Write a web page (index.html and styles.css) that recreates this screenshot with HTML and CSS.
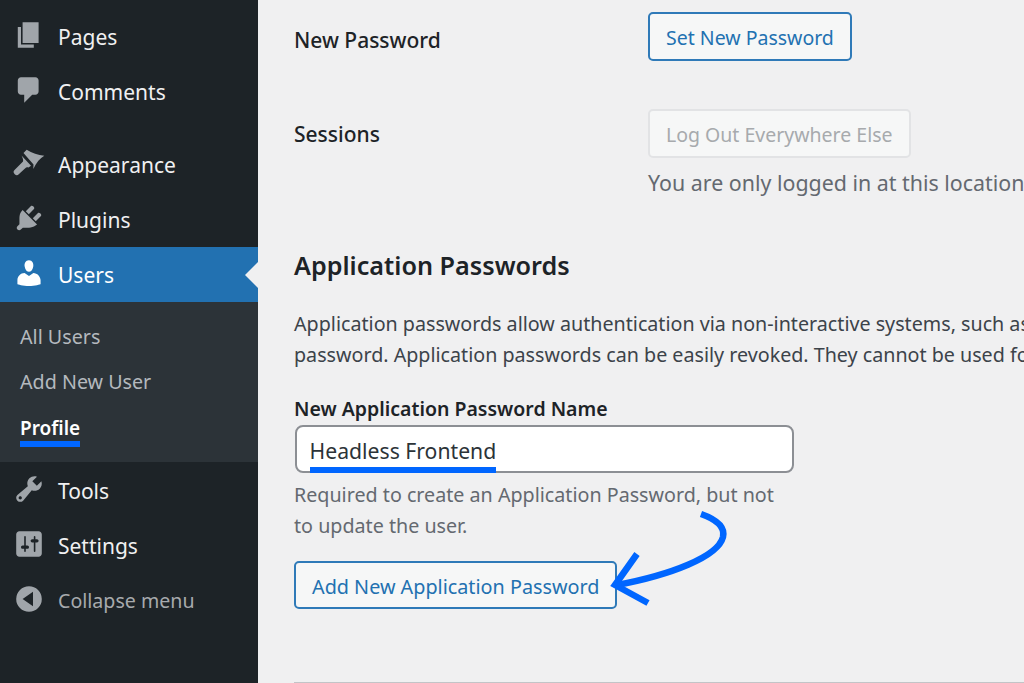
FILE: index.html
```html
<!DOCTYPE html>
<html lang="en">
<head>
  <meta charset="UTF-8">
  <meta name="viewport" content="width=device-width, initial-scale=1.0">
  <title>Profile</title>
  <link rel="stylesheet" href="styles.css">
</head>
<body>
  <nav class="sidebar">
    <a class="menu-item" href="#">
      <svg class="icon" viewBox="0 0 20 20"><path d="M6 15V2h10v13H6zm-1 1h8v2H3V5h2v11z"/></svg>
      <span>Pages</span>
    </a>
    <a class="menu-item" href="#">
      <svg class="icon" viewBox="0 0 20 20"><path d="M5 2h9c1.100 0 2 .9 2 2v7c0 1.100-.9 2-2 2h-2l-5 5v-5H5c-1.100 0-2-.9-2-2V4c0-1.100.9-2 2-2z"/></svg>
      <span>Comments</span>
    </a>
    <div class="menu-separator"></div>
    <a class="menu-item" href="#">
      <svg class="icon" viewBox="0 0 32 32"><path d="M10.500 6L13.700 2.700C19 6 25 8 31.300 8.700C27 11 23.500 15.500 20.300 22L20.500 17.500z"/><path d="M8.500 8.500L18 18.700L15.500 20.500C14 20 13 20.500 12 21.500L6 27a3 3 0 0 1-4.500-4L10 14.500C10.500 12.500 9.500 10.500 8.500 8.500z"/></svg>
      <span>Appearance</span>
    </a>
    <a class="menu-item" href="#">
      <svg class="icon" viewBox="0 0 20 20"><path d="M13.110 4.360L9.870 7.600 8 5.730l3.240-3.240c.35-.34 1.050-.2 1.560.32.52.51.66 1.210.31 1.550zm-8 1.770l.91-1.120 9.010 9.010-1.190.84c-.71.71-2.630 1.160-3.820 1.160H6.140L4.900 17.260c-.59.59-1.540.59-2.120 0-.59-.58-.59-1.530 0-2.120l1.240-1.240v-3.880c0-1.130.4-3.190 1.090-3.890zm7.260 3.970l3.240-3.240c.34-.35 1.040-.21 1.550.31.52.51.66 1.210.31 1.550l-3.240 3.250z"/></svg>
      <span>Plugins</span>
    </a>
    <a class="menu-item active" href="#">
      <svg class="icon" viewBox="0 0 20 20"><path d="M10 9.250c-2.270 0-2.730-3.440-2.730-3.440C7 4.020 7.820 2 9.970 2c2.160 0 2.980 2.020 2.710 3.810 0 0-.41 3.440-2.680 3.440zm0 2.570L12.720 10c2.390 0 4.520 2.330 4.520 4.530v2.490s-3.650 1.130-7.240 1.130c-3.650 0-7.240-1.130-7.240-1.130v-2.490c0-2.250 1.940-4.480 4.470-4.480z"/></svg>
      <span>Users</span>
    </a>
    <div class="submenu">
      <a href="#">All Users</a>
      <a href="#">Add New User</a>
      <a class="current" href="#"><span class="marked">Profile</span></a>
    </div>
    <a class="menu-item" href="#">
      <svg class="icon" viewBox="0 0 20 20"><path d="M16.680 9.770c-1.340 1.340-3.300 1.670-4.950.99l-5.410 6.520c-.99.99-2.590.99-3.580 0s-.99-2.590 0-3.570l6.520-5.420c-.68-1.650-.35-3.610.99-4.950 1.280-1.280 3.120-1.620 4.720-1.060l-2.890 2.890 2.820 2.820 2.860-2.870c.53 1.580.18 3.390-1.080 4.650zM3.810 16.210c.4.390 1.040.39 1.430 0 .4-.4.4-1.040 0-1.430-.39-.4-1.030-.4-1.430 0-.39.39-.39 1.030 0 1.430z"/></svg>
      <span>Tools</span>
    </a>
    <a class="menu-item" href="#">
      <svg class="icon" viewBox="0 0 20 20"><path d="M18 16V4c0-1.100-.9-2-2-2H4c-1.100 0-2 .9-2 2v12c0 1.100.9 2 2 2h12c1.100 0 2-.9 2-2zM8 11h1c.55 0 1 .45 1 1s-.45 1-1 1H8v1.500c0 .28-.22.5-.5.5s-.5-.22-.5-.5V13H6c-.55 0-1-.45-1-1s.45-1 1-1h1V5.500c0-.28.22-.5.5-.5s.5.22.5.5V11zm5-2h-1c-.55 0-1-.45-1-1s.45-1 1-1h1V5.500c0-.28.22-.5.5-.5s.5.22.5.5V7h1c.55 0 1 .45 1 1s-.45 1-1 1h-1v5.500c0 .28-.22.5-.5.5s-.5-.22-.5-.5V9z"/></svg>
      <span>Settings</span>
    </a>
    <a class="menu-item collapse" href="#">
      <svg class="icon" viewBox="0 0 20 20"><path fill-rule="evenodd" d="M10 2a8 8 0 1 0 0 16 8 8 0 0 0 0-16zm2.500 3.500v9L6 10z"/></svg>
      <span>Collapse menu</span>
    </a>
  </nav>

  <main class="content">
    <div class="form-row row-password">
      <div class="row-label">New Password</div>
      <div><button class="button">Set New Password</button></div>
    </div>
    <div class="form-row row-sessions">
      <div class="row-label">Sessions</div>
      <div>
        <button class="button" disabled>Log Out Everywhere Else</button>
        <p class="description session-note">You are only logged in at this location.</p>
      </div>
    </div>

    <h2>Application Passwords</h2>
    <p class="intro">Application passwords allow authentication via non-interactive systems, such as XML-RPC or the REST API, without providing your actual<br>password. Application passwords can be easily revoked. They cannot be used for traditional logins to your website.</p>

    <div class="new-password">
      <label class="field-label">New Application Password Name</label>
      <div class="text-input"><span class="marked">Headless Frontend</span></div>
      <p class="description">Required to create an Application Password, but not to update the user.</p>
      <button class="button button-add">Add New Application Password</button>
      <svg class="arrow" viewBox="0 0 130 110">
        <path d="M101 9C118 15 125 23 123 32C118 52 70 70 17 80"/>
        <path d="M37 49L15 80L48 98"/>
      </svg>
    </div>
    <hr class="bottom-rule">
  </main>
</body>
</html>
```

FILE: styles.css
```css
/* Base */
html, body {
  height: 100%;
}

body {
  margin: 0;
  display: flex;
  overflow: hidden;
  font-family: 'Noto Sans', sans-serif;
  background-color: #f0f0f1;
  color: #1d2327;
}

a {
  text-decoration: none;
}

/* Sidebar */
.sidebar {
  width: 258px;
  flex-shrink: 0;
  padding-top: 9px;
  box-sizing: border-box;
  background-color: #1d2327;
}

.menu-item {
  position: relative;
  display: flex;
  align-items: center;
  gap: 13px;
  height: 55px;
  padding-left: 13px;
  font-size: 21px;
  color: #f0f0f1;
}

.icon {
  width: 32px;
  height: 32px;
  flex-shrink: 0;
  margin-top: -3px;
  fill: #a0a5aa;
}

.menu-separator {
  height: 18px;
}

.menu-item.active {
  background-color: #2271b1;
  color: #ffffff;
}

.menu-item.active .icon {
  fill: #ffffff;
}

.menu-item.active::after {
  content: '';
  position: absolute;
  right: 0;
  top: 15px;
  border: 13px solid transparent;
  border-left-width: 0;
  border-right-color: #f0f0f1;
}

.menu-item.collapse {
  font-size: 19.6px;
  color: #a7aaad;
}

.submenu {
  display: flex;
  flex-direction: column;
  height: 160px;
  margin-bottom: 1px;
  padding-top: 12px;
  box-sizing: border-box;
  background-color: #2c3338;
}

.submenu a {
  height: 45px;
  padding-left: 20px;
  font-size: 19.7px;
  line-height: 45px;
  color: #b4b9be;
}

.submenu a.current {
  font-size: 19px;
  font-weight: 600;
  line-height: 49px;
  color: #ffffff;
}

.marked {
  display: inline-block;
  line-height: 1.2;
  padding-bottom: 1px;
  border-bottom: 6px solid #0066ff;
}

/* Content */
.content {
  flex: 1;
  min-width: 0;
  padding-left: 36px;
}

.form-row {
  display: grid;
  grid-template-columns: 354px 1fr;
}

.row-password {
  padding-top: 12px;
  height: 109px;
  box-sizing: border-box;
}

.row-label {
  font-size: 21px;
  font-weight: 500;
  padding-top: 14px;
}

.row-sessions .row-label {
  padding-top: 11px;
}

.button {
  height: 49px;
  padding: 2px 16px 0;
  box-sizing: border-box;
  border: 2px solid #2f7ab8;
  border-radius: 5px;
  background-color: #f6f7f7;
  color: #2271b1;
  font-family: inherit;
  font-size: 19.5px;
}

.button:disabled {
  border-color: #e2e3e5;
  color: #a7aaad;
}

.description {
  margin: 0;
  font-size: 19.7px;
  line-height: 31px;
  color: #646970;
}

.session-note {
  margin-top: 9px;
  font-size: 21.4px;
  white-space: nowrap;
}

h2 {
  margin: 0;
  padding-top: 50px;
  font-size: 25.2px;
  font-weight: 600;
  line-height: 34px;
}

.intro {
  margin: 26px 0 0;
  font-size: 19.7px;
  line-height: 31px;
  white-space: nowrap;
  color: #3c434a;
}

/* Application password form */
.new-password {
  position: relative;
  width: 500px;
  padding-top: 25px;
}

.field-label {
  display: block;
  font-size: 19.5px;
  font-weight: 600;
  line-height: 28px;
}

.text-input {
  height: 48px;
  margin: 2px 0 6px 1px;
  padding: 9px 12.5px 0;
  box-sizing: border-box;
  border: 2px solid #8c8f94;
  border-radius: 8px;
  background-color: #ffffff;
  font-size: 21.2px;
  color: #2c3338;
}

.text-input .marked {
  line-height: 30px;
}

.button-add {
  display: block;
  height: 48px;
  margin-top: 20px;
  font-size: 19.8px;
}

/* Blue annotation arrow drawn over the form */
.arrow {
  position: absolute;
  left: 306px;
  bottom: -6px;
  width: 130px;
  height: 110px;
  fill: none;
  stroke: #0066ff;
  stroke-width: 6.5;
}

.bottom-rule {
  position: absolute;
  left: 294px;
  right: 0;
  top: 682px;
  margin: 0;
  border: 0;
  border-top: 1px solid #c3c4c7;
}
```
